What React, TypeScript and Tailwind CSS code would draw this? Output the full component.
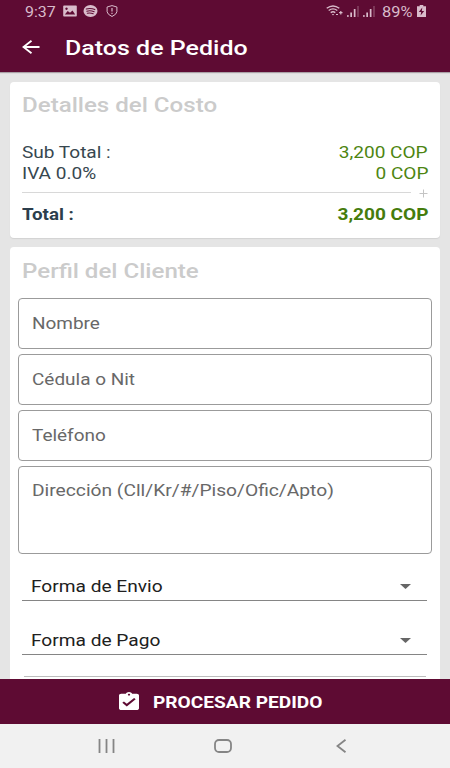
import React from 'react';

type SpinnerProps = { label: string };

const costs = [
  { label: 'Sub Total :', value: '3,200 COP' },
  { label: 'IVA 0.0%', value: '0 COP' },
];

const fields = ['Nombre', 'Cédula o Nit', 'Teléfono'];

const StatusBar = () => (
  <div className="flex h-[23px] items-center justify-between pl-[25px] pr-[24px] text-[#d9bccb]">
    <div className="flex items-center">
      <span className="w-[38px] origin-left scale-x-[1.14] pt-px text-[14px] leading-[23px]">9:37</span>
      <svg width="14" height="12" viewBox="0 0 14 12" className="-mt-px">
        <path fillRule="evenodd" fill="currentColor" d="M1 .5h12q.8 0 .8.8v9.4q0 .8-.8.8H1q-.8 0-.8-.8V1.300Q.2.5 1 .5zM1.800 9.500h10.400L9.500 5.500 7 7.800 4.700 6zM3.500 2.500a1.200 1.200 0 1 0 .01 0z" />
      </svg>
      <svg width="15" height="12" viewBox="0 0 15 12" className="-mt-px ml-[6px]">
        <ellipse cx="7.500" cy="6" rx="7" ry="6" fill="currentColor" />
        <path d="M3.300 4q4.500-1.200 8.500.6M3.800 6.200q3.800-1 7.300.6M4.300 8.200q3-.7 5.900.5" fill="none" stroke="#5e0b33" strokeWidth="1.100" strokeLinecap="round" />
      </svg>
      <svg width="12" height="12" viewBox="0 0 12 12" className="-mt-px ml-[8px]" fill="none" stroke="currentColor">
        <path d="M6 .6 10.900 2v4.800Q10.500 9.500 6 11.500 1.500 9.500 1.100 6.800V2z" />
        <path d="M6 3v3.600M6 7.800v1.200" strokeWidth="1.200" />
      </svg>
    </div>
    <div className="flex items-center">
      <svg width="17" height="12" viewBox="0 0 17 12" className="-mt-px" fill="none" stroke="currentColor" strokeWidth="1.400">
        <path d="M.7 3.300Q7 -1.400 13.300 3.300M2.700 5.500Q7 2.300 11.300 5.500M4.700 7.600Q7 5.900 9.300 7.600" />
        <path d="M5.800 9h2.400L7 10.500z" fill="currentColor" stroke="none" />
        <path d="M14.800 6v3.400M13.100 7.700h3.400M10 9.500h2" strokeWidth="1.200" />
      </svg>
      {[0, 1].map((i) => (
        <svg key={i} width="12" height="11" viewBox="0 0 12 11" className="ml-[4px]" fill="currentColor">
          <path d="M.2 9h1.400v2H.2zM3.300 6.500h1.700V11H3.300zM6.800 3h1.700v8H6.800z" />
          <path d="M10.300 0h1.400v11h-1.400z" opacity=".35" />
        </svg>
      ))}
      <span className="ml-[7px] w-[32px] origin-left scale-x-[1.17] pt-px text-[14px] leading-[23px]">89%</span>
      <svg width="9" height="12" viewBox="0 0 9 12" className="-mt-px ml-[3px]">
        <path d="M2.700 0h3.600v1.300H9V12H0V1.300h2.700z" fill="currentColor" />
        <path d="M5.300 2.500 1.800 7h2.400l-.6 3.500L7.200 6H4.800z" fill="#5e0b33" />
      </svg>
    </div>
  </div>
);

const Spinner = ({ label }: SpinnerProps) => (
  <div className="ml-[4px] mr-[5px] flex h-[30px] items-center justify-between border-b border-[#858585] pl-[9px] pr-[16px] text-[#202020]">
    <span className="origin-left scale-x-[1.195] whitespace-nowrap pt-[2px] text-[16px]">{label}</span>
    <svg width="11" height="5" viewBox="0 0 11 5" className="mt-px">
      <path d="M0 0h11L5.500 5z" fill="#666" />
    </svg>
  </div>
);

const App = () => {
  return (
    <div className="flex h-[768px] w-[450px] flex-col overflow-hidden bg-[#e5e5e5] font-['Roboto',sans-serif]">
      {/* Header */}
      <header className="h-[72px] shrink-0 bg-[#5e0b33] shadow-[0_1px_1px_#a9a0a5]">
        <StatusBar />
        <div className="flex h-[49px] items-center pl-[22px]">
          <svg width="18" height="14" viewBox="0 0 18 14" className="-mt-px" fill="none" stroke="white" strokeWidth="1.800">
            <path d="M17.500 7H1.500M9.500 .8 1.500 7l8 6.200" />
          </svg>
          <h1 className="ml-[25px] origin-left scale-x-[1.25] whitespace-nowrap text-[20px] font-medium text-white">Datos de Pedido</h1>
        </div>
      </header>

      {/* Content */}
      <main className="flex min-h-0 flex-1 flex-col gap-[9px] overflow-hidden px-[10px] pt-[10px]">
        <section className="h-[156px] shrink-0 rounded bg-white px-[12px] pt-[11px] shadow-[0_1px_1px_#d2d2d2]">
          <h2 className="w-max origin-left scale-x-[1.205] text-[20px] leading-[24px] font-medium text-[#cbcbcb]">Detalles del Costo</h2>
          <div className="mt-[25px]">
            {costs.map((cost) => (
              <div key={cost.label} className="flex h-[21px] items-center justify-between text-[16px]">
                <span className="origin-left scale-x-[1.19] text-[#37474f]">{cost.label}</span>
                <span className="origin-right scale-x-[1.19] text-[#4d8510]">{cost.value}</span>
              </div>
            ))}
          </div>
          <div className="flex h-[18px] items-center justify-between">
            <div className="-mt-px h-px w-[389px] bg-[#d8d8d8]" />
            <svg width="9" height="9" viewBox="0 0 9 9">
              <path d="M4.500 .5v8M.5 4.500h8" stroke="#c4c4c4" />
            </svg>
          </div>
          <div className="flex h-[26px] items-center justify-between text-[16px] font-bold">
            <span className="origin-left scale-x-[1.17] text-[#2c3e4c]">Total :</span>
            <span className="origin-right scale-x-[1.19] text-[#457c0c]">3,200 COP</span>
          </div>
        </section>

        <section className="h-[460px] shrink-0 rounded bg-white px-[8px] pt-[12px]">
          <h2 className="ml-[4px] w-max origin-left scale-x-[1.205] text-[20px] leading-[24px] font-medium text-[#cbcbcb]">Perfil del Cliente</h2>
          <div className="mt-[15px] flex flex-col gap-[5px]">
            {fields.map((field) => (
              <div key={field} className="flex h-[51px] items-center rounded border border-[#9b9b9b] pl-[13px] text-[16px] text-[#686868]">
                <span className="origin-left scale-x-[1.185] whitespace-nowrap">{field}</span>
              </div>
            ))}
            <div className="h-[88px] rounded border border-[#9b9b9b] pl-[13px] pt-[12px] text-[16px] text-[#686868]">
              <span className="inline-block origin-left scale-x-[1.2] whitespace-nowrap">Dirección (Cll/Kr/#/Piso/Ofic/Apto)</span>
            </div>
          </div>
          <div className="mt-[17px] flex flex-col gap-[24px]">
            <Spinner label="Forma de Envio" />
            <Spinner label="Forma de Pago" />
          </div>
          <div className="mx-[6px] mt-[21px] h-px bg-[#bdbdbd]" />
        </section>
      </main>

      {/* Submit button */}
      <button className="flex h-[45px] shrink-0 items-center bg-[#5e0b33] pl-[119px] text-white">
        <svg width="20" height="18" viewBox="3 1 18 20" preserveAspectRatio="none" className="-mt-px">
          <path fill="currentColor" d="M19 3h-4.180C14.400 1.840 13.300 1 12 1s-2.400.84-2.820 2H5c-1.100 0-2 .9-2 2v14c0 1.100.9 2 2 2h14c1.100 0 2-.9 2-2V5c0-1.100-.9-2-2-2zm-7 0c.55 0 1 .45 1 1s-.45 1-1 1-1-.45-1-1 .45-1 1-1zm-2 14-4-4 1.410-1.410L10 14.170l6.590-6.590L18 9l-8 8z" />
        </svg>
        <span className="ml-[14px] origin-left scale-x-[1.195] whitespace-nowrap pt-[2px] text-[16px] font-bold">PROCESAR PEDIDO</span>
      </button>

      {/* Navigation bar */}
      <nav className="flex h-[44px] shrink-0 items-center bg-[#f1f1f1] pl-[98px]">
        <svg width="17" height="14" viewBox="0 0 17 14" stroke="#858585" strokeWidth="1.800">
          <path d="M1.500 0v14M8.500 0v14M15.500 0v14" />
        </svg>
        <svg width="18" height="14" viewBox="0 0 18 14" className="ml-[99px]">
          <rect x="1" y="1" width="16" height="12" rx="4" fill="none" stroke="#858585" strokeWidth="1.800" />
        </svg>
        <svg width="11" height="14" viewBox="0 0 11 14" className="ml-[104px]">
          <path d="M9.500 .8 1.500 7l8 6.200" fill="none" stroke="#858585" strokeWidth="1.800" />
        </svg>
      </nav>
    </div>
  );
};

export default App;
